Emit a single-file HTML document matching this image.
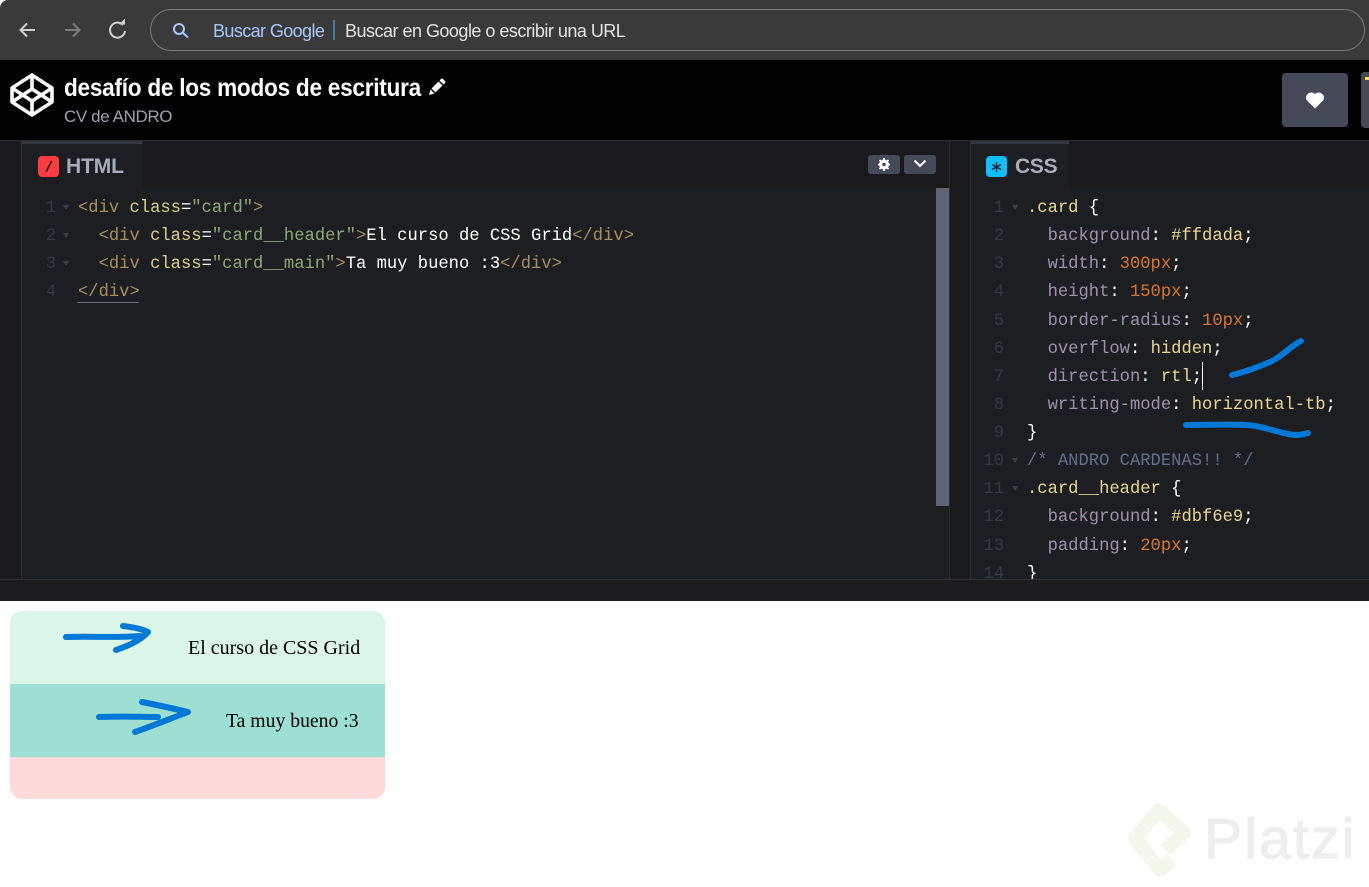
<!DOCTYPE html>
<html lang="es"><head><meta charset="utf-8"><title>CodePen</title>
<style>
*{box-sizing:border-box}
html,body{margin:0;padding:0;width:1369px;height:887px;overflow:hidden;background:#fff}
.a{position:absolute}
.s{font-family:"Liberation Sans",sans-serif;white-space:nowrap}
.l{position:absolute;font:17.16px/28px "Liberation Mono",monospace;white-space:pre;color:#fff;margin-top:2px}
.n{position:absolute;font:17.16px/28px "Liberation Mono",monospace;color:#36383f;text-align:right;white-space:pre;margin-top:2px}
.t{position:absolute;width:0;height:0;border-left:3.5px solid transparent;border-right:3.5px solid transparent;border-top:5px solid #3c3f47;margin-top:1px}
.g{color:#a88f5c}.c{color:#d8cf88}.v{color:#8fa876}.p{color:#9e93a8}.y{color:#e6d98f}.o{color:#d9772e}.m{color:#666d8c}
.w{color:#fff}
</style></head>
<body>
<div class="a" style="left:0;top:0;width:1369px;height:60px;background:#3a3a3a;border-top-left-radius:8px"></div>
<svg class="a" style="left:0;top:0" width="140" height="60" fill="none" stroke-width="2">
<path d="M35 30H21M27 23.500l-6.500 6.500 6.500 6.500" stroke="#d0d0d0"/>
<path d="M65 30H79M73 23.500l6.500 6.500-6.500 6.500" stroke="#7c7c7c"/>
<path d="M123 25A7.500 7.500 0 1 0 125 31" stroke="#d0d0d0"/>
<path d="M119 24.500h6v-6z" fill="#d0d0d0"/>
</svg>
<div class="a" style="left:150px;top:9px;width:1215px;height:42px;border:1.500px solid #7a7a7a;border-radius:21px"></div>
<svg class="a" style="left:170px;top:20px" width="20" height="20" fill="none" stroke="#a8c7fa" stroke-width="2"><circle cx="9" cy="9" r="5"/><path d="M12.500 12.500L18 17.500"/></svg>
<div class="a s" style="left:213px;top:20px;font-size:18px;line-height:22px;color:#a8c7fa;letter-spacing:-.6px">Buscar Google</div>
<div class="a" style="left:333px;top:20px;width:2px;height:20px;background:#3f7fa8"></div>
<div class="a s" style="left:345px;top:20px;font-size:18px;line-height:22px;color:#e3e3e3;letter-spacing:-.51px">Buscar en Google o escribir una URL</div>

<div class="a" style="left:0;top:60px;width:1369px;height:81px;background:#000;border-bottom:1px solid #2c2c2e"></div>
<svg class="a" style="left:9px;top:72px" width="46" height="46" fill="none" stroke="#fff" stroke-width="3.600" stroke-linejoin="round">
<path d="M23 3L43 16V30L23 43L3 30V16Z"/><path d="M23 3V17M23 29V43M3 16L23 29L43 16M3 30L23 17L43 30"/>
</svg>
<div class="a s" style="left:64px;top:73px;font-size:25px;line-height:30px;font-weight:bold;color:#fff;letter-spacing:-.3px;transform:scaleX(.905);transform-origin:0 0">desafío de los modos de escritura</div>
<svg class="a" style="left:428px;top:78px" width="18" height="18" fill="#fff"><path d="M1 17L2.500 11.500L6.500 15.500Z"/><path d="M3.500 10.500L10.500 3.500L14.500 7.500L7.500 14.500Z"/><path d="M11.500 2.500L13 1Q14 0 15 1L17 3Q18 4 17 5L15.500 6.500Z"/></svg>
<div class="a s" style="left:64px;top:106px;font-size:17px;line-height:21px;color:#9ea2ad;letter-spacing:-.4px">CV de ANDRO</div>
<div class="a" style="left:1282px;top:73px;width:66px;height:54px;background:#444857;border-radius:4px"></div>
<svg class="a" style="left:1304px;top:90px" width="22" height="20" fill="#fff"><path d="M11 18.500L2.500 10A5.300 5.300 0 0 1 11 4A5.300 5.300 0 0 1 19.500 10Z"/></svg>
<div class="a" style="left:1361px;top:72px;width:8px;height:56px;background:#444857;border-radius:4px 0 0 4px"></div>
<div class="a" style="left:1365px;top:77px;width:4px;height:3px;background:#ffdd40"></div>

<div class="a" style="left:0;top:141px;width:1369px;height:460px;background:#1d1e22"></div>
<div class="a" style="left:0;top:141px;width:22px;height:438px;background:#1a1a1c;border-right:1px solid #2e2f33"></div>
<div class="a" style="left:22px;top:141px;width:927px;height:47px;background:#1a1a1c"></div>
<div class="a" style="left:22px;top:141px;width:121px;height:47px;background:#1d1e22;border-top:3px solid #343640"></div>
<div class="a" style="left:38px;top:156px;width:21px;height:21px;background:#ff3c41;border-radius:4px"></div>
<svg class="a" style="left:38px;top:156px" width="21" height="21" stroke="#1d1e22" stroke-width="1.500"><path d="M13.500 5L8 16"/></svg>
<div class="a s" style="left:66px;top:154px;font-size:21px;line-height:25px;font-weight:bold;color:#a9adb8;letter-spacing:-.1px">HTML</div>
<div class="a" style="left:868px;top:155px;width:32px;height:19px;background:#444857;border-radius:3px"></div>
<div class="a" style="left:904px;top:155px;width:32px;height:19px;background:#444857;border-radius:3px"></div>
<svg class="a" style="left:876px;top:157px" width="16" height="15"><circle cx="8" cy="7.500" r="3.500" fill="none" stroke="#fff" stroke-width="3"/><path d="M8 1v13M2 7.500h12M3.500 3l9 9M12.500 3l-9 9" stroke="#fff" stroke-width="1.800"/><circle cx="8" cy="7.500" r="1.800" fill="#444857"/></svg>
<svg class="a" style="left:912px;top:158px" width="16" height="12" fill="none" stroke="#fff" stroke-width="2"><path d="M2.500 2.500L8 8L13.500 2.500"/></svg>
<div class="a" style="left:936px;top:188px;width:13px;height:318px;background:#5f6373"></div>
<div class="a" style="left:949px;top:141px;width:1px;height:438px;background:#2c2d31"></div>
<div class="a" style="left:950px;top:141px;width:20px;height:438px;background:#1a1a1c"></div>
<div class="a" style="left:970px;top:141px;width:1px;height:438px;background:#2e2f33"></div>
<div class="a" style="left:971px;top:141px;width:398px;height:47px;background:#1a1a1c"></div>
<div class="a" style="left:971px;top:141px;width:98px;height:47px;background:#1d1e22;border-top:3px solid #343640"></div>
<div class="a" style="left:986px;top:156px;width:21px;height:21px;background:#0ebeff;border-radius:4px"></div>
<svg class="a" style="left:986px;top:156px" width="21" height="21" stroke="#1d1e22" stroke-width="1.300"><path d="M10.500 6v10M6 8.500l9 5M15 8.500l-9 5"/></svg>
<div class="a s" style="left:1015px;top:154px;font-size:21px;line-height:25px;font-weight:bold;color:#a9adb8;letter-spacing:-.3px">CSS</div>

<!-- HTML code -->
<div class="n" style="left:30px;top:193px;width:26px">1</div><div class="t" style="left:63px;top:204px"></div>
<div class="n" style="left:30px;top:221px;width:26px">2</div><div class="t" style="left:63px;top:232px"></div>
<div class="n" style="left:30px;top:249px;width:26px">3</div><div class="t" style="left:63px;top:260px"></div>
<div class="n" style="left:30px;top:277px;width:26px">4</div>
<div class="l" style="left:78px;top:193px"><span class="g">&lt;div</span> <span class="c">class</span><span class="w">=</span><span class="v">"card"</span><span class="g">&gt;</span></div>
<div class="l" style="left:78px;top:221px">  <span class="g">&lt;div</span> <span class="c">class</span><span class="w">=</span><span class="v">"card__header"</span><span class="g">&gt;</span>El curso de CSS Grid<span class="g">&lt;/div&gt;</span></div>
<div class="l" style="left:78px;top:249px">  <span class="g">&lt;div</span> <span class="c">class</span><span class="w">=</span><span class="v">"card__main"</span><span class="g">&gt;</span>Ta muy bueno :3<span class="g">&lt;/div&gt;</span></div>
<div class="l" style="left:78px;top:277px"><span class="g">&lt;/div&gt;</span></div>
<div class="a" style="left:77px;top:302px;width:62px;height:1px;background:#6e7078"></div>

<!-- CSS code -->
<div class="a" style="left:971px;top:188px;width:398px;height:391px;overflow:hidden">
<div class="n" style="left:-1px;top:5px;width:34px">1</div><div class="t" style="left:41px;top:16px"></div>
<div class="n" style="left:-1px;top:33px;width:34px">2</div>
<div class="n" style="left:-1px;top:61px;width:34px">3</div>
<div class="n" style="left:-1px;top:89px;width:34px">4</div>
<div class="n" style="left:-1px;top:118px;width:34px">5</div>
<div class="n" style="left:-1px;top:146px;width:34px">6</div>
<div class="n" style="left:-1px;top:174px;width:34px">7</div>
<div class="n" style="left:-1px;top:202px;width:34px">8</div>
<div class="n" style="left:-1px;top:230px;width:34px">9</div>
<div class="n" style="left:-1px;top:258px;width:34px">10</div><div class="t" style="left:41px;top:269px"></div>
<div class="n" style="left:-1px;top:286px;width:34px">11</div><div class="t" style="left:41px;top:297px"></div>
<div class="n" style="left:-1px;top:314px;width:34px">12</div>
<div class="n" style="left:-1px;top:343px;width:34px">13</div>
<div class="n" style="left:-1px;top:371px;width:34px">14</div>
<div class="l" style="left:56px;top:5px"><span class="y">.card</span> {</div>
<div class="l" style="left:56px;top:33px">  <span class="p">background</span>: <span class="y">#ffdada</span>;</div>
<div class="l" style="left:56px;top:61px">  <span class="p">width</span>: <span class="o">300px</span>;</div>
<div class="l" style="left:56px;top:89px">  <span class="p">height</span>: <span class="o">150px</span>;</div>
<div class="l" style="left:56px;top:118px">  <span class="p">border-radius</span>: <span class="o">10px</span>;</div>
<div class="l" style="left:56px;top:146px">  <span class="p">overflow</span>: <span class="y">hidden</span>;</div>
<div class="l" style="left:56px;top:174px">  <span class="p">direction</span>: <span class="y">rtl</span>;</div>
<div class="l" style="left:56px;top:202px">  <span class="p">writing-mode</span>: <span class="y">horizontal-tb</span>;</div>
<div class="l" style="left:56px;top:230px">}</div>
<div class="l" style="left:56px;top:258px"><span class="m">/* ANDRO CARDENAS!! */</span></div>
<div class="l" style="left:56px;top:286px"><span class="y">.card__header</span> {</div>
<div class="l" style="left:56px;top:314px">  <span class="p">background</span>: <span class="y">#dbf6e9</span>;</div>
<div class="l" style="left:56px;top:343px">  <span class="p">padding</span>: <span class="o">20px</span>;</div>
<div class="l" style="left:56px;top:371px">}</div>
<div class="a" style="left:231px;top:174px;width:1px;height:28px;background:#fff"></div>
</div>

<div class="a" style="left:0;top:579px;width:1369px;height:22px;background:#1c1c1e;border-top:1px solid #303134"></div>

<!-- Card -->
<div class="a" style="left:10px;top:611px;width:375px;height:188px;background:#ffdada;border-radius:12px;overflow:hidden">
<div class="a" style="left:0;top:0;width:375px;height:73px;background:#dbf6e9"></div>
<div class="a" style="left:0;top:73px;width:375px;height:73px;background:#9edfd3"></div>
</div>
<div class="a" style="left:188px;top:637px;font:20px/22px 'Liberation Serif',serif;color:#000;white-space:nowrap">El curso de CSS Grid</div>
<div class="a" style="left:226px;top:710px;font:19.7px/22px 'Liberation Serif',serif;color:#000;white-space:nowrap">Ta muy bueno :3</div>

<!-- Hand-drawn strokes -->
<svg class="a" style="left:0;top:0" width="1369" height="887" fill="none" stroke="#0078d7" stroke-linecap="round" stroke-linejoin="round">
<path d="M1232 375C1245 372 1258 367 1270 362C1282 357 1290 346 1301 341" stroke-width="6"/>
<path d="M1186 425C1205 425 1230 424 1247 425C1265 426 1280 434 1295 435C1300 435 1305 434 1308 433" stroke-width="6"/>
<path d="M66 637C90 636 115 638 140 636M123 626C132 627 142 629 148 632C141 640 128 646 116 650" stroke-width="6"/>
<path d="M99 717C120 716 140 717 158 717M142 702C158 705 175 709 188 712C172 718 152 726 135 732" stroke-width="6"/>
</svg>

<!-- Watermark -->
<svg class="a" style="left:1125px;top:800px" width="70" height="80" fill="none" stroke="#f4f8ec" stroke-width="14" stroke-linejoin="round" stroke-linecap="butt"><path d="M40 50L59 33L34 10L10 38L35 70L47 60"/></svg>
<div class="a s" style="left:1204px;top:805px;font-size:57px;line-height:68px;color:#eeeeee;letter-spacing:2.2px;-webkit-text-stroke:1.2px #eeeeee">Platzi</div>
</body></html>
